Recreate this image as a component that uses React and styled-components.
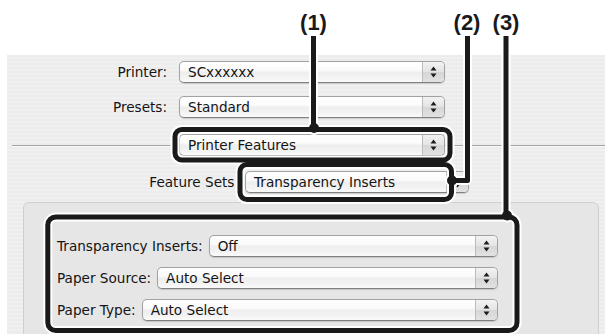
import React from 'react';
import styled, { createGlobalStyle } from 'styled-components';

const GlobalStyle = createGlobalStyle`
  html, body { margin: 0; padding: 0; background: #ffffff; }
  body { font-family: "DejaVu Sans", "Noto Sans", sans-serif; }
`;

const Page = styled.div`
  position: relative;
  width: 605px;
  height: 334px;
  overflow: hidden;
  background: #ffffff;
  display: flex;
  flex-direction: column;
`;

const Header = styled.div`
  height: 55px;
  flex: none;
`;

const Panel = styled.div`
  flex: 1;
  min-height: 0;
  margin-left: 7px;
  padding-top: 6px;
  background: repeating-linear-gradient(to bottom, #ececec 0px, #ececec 2px, #f0f0f0 2px, #f0f0f0 4px);
  display: flex;
  flex-direction: column;
`;

const FormGrid = styled.div`
  display: grid;
  grid-template-columns: 160px 266px;
  column-gap: 12px;
  row-gap: 13px;
  align-items: center;
`;

const Label = styled.span`
  font-size: 13.6px;
  color: #141414;
  white-space: nowrap;
  text-align: ${p => (p.$right ? 'right' : 'left')};
  width: ${p => (p.$w ? `${p.$w}px` : 'auto')};
  flex: none;
`;

const PopupBox = styled.div`
  box-sizing: border-box;
  height: 22px;
  width: ${p => (p.$w ? `${p.$w}px` : 'auto')};
  flex: ${p => (p.$w ? 'none' : '1')};
  display: flex;
  align-items: stretch;
  border: 1px solid #a2a2a2;
  border-bottom-color: #808080;
  border-radius: 5px;
  background: linear-gradient(to bottom, #ffffff 0%, #fbfbfb 40%, #eeeeee 52%, #f3f3f3 80%, #fbfbfb 100%);
  box-shadow: 0 1px 1px rgba(0, 0, 0, 0.15);
  overflow: hidden;
`;

const PopupText = styled.span`
  flex: 1;
  padding-left: 8px;
  font-size: 13.6px;
  line-height: 20px;
  color: #141414;
  white-space: nowrap;
  overflow: hidden;
`;

const Stepper = styled.span`
  width: 21px;
  flex: none;
  border-left: 1px solid #bcbcbc;
  background: linear-gradient(to bottom, #f2f2f2 0%, #e4e4e4 48%, #d6d6d6 52%, #e2e2e2 100%);
  display: flex;
  align-items: center;
  justify-content: center;
`;

const SeparatorRow = styled.div`
  display: flex;
  align-items: center;
  margin-top: 16px;
  height: 22px;
`;

const Rule = styled.div`
  height: 1px;
  background: #a4a4a4;
  box-shadow: 0 1px 0 #fafafa;
  margin-left: ${p => p.$ml || 0}px;
  width: ${p => (p.$w ? `${p.$w}px` : 'auto')};
  flex: ${p => (p.$w ? 'none' : '1')};
`;

const FeatureRow = styled.div`
  display: flex;
  align-items: center;
  gap: 6px;
  margin-top: 15px;
  padding-left: 142px;
`;

const GroupBox = styled.div`
  box-sizing: border-box;
  flex: 1;
  margin: 9px 0 -20px 16px;
  width: 576px;
  border: 1px solid #cfcfcf;
  border-radius: 6px;
  background: #e6e6e6;
  padding: 32px 100px 0 33px;
  display: flex;
  flex-direction: column;
  gap: 10px;
`;

const OptionRow = styled.div`
  display: flex;
  align-items: center;
  gap: 6px;
`;

const Callouts = styled.svg`
  position: absolute;
  left: 0;
  top: 0;
  pointer-events: none;
`;

const CalloutLabel = styled.span`
  position: absolute;
  top: 12px;
  left: ${p => p.$x}px;
  transform: translateX(-50%);
  font-family: "Liberation Sans", Arial, sans-serif;
  font-weight: bold;
  font-size: 22px;
  line-height: 22px;
  color: #1a1a1a;
`;

function Arrows() {
  return (
    <svg width="7" height="14" viewBox="0 0 7 14">
      <polygon points="3.5,1.5 6.5,5.5 0.5,5.5" fill="#1c1c1c" />
      <polygon points="0.5,8.5 6.5,8.5 3.5,12.5" fill="#1c1c1c" />
    </svg>
  );
}

function Popup({ value, w }) {
  return (
    <PopupBox $w={w}>
      <PopupText>{value}</PopupText>
      <Stepper>
        <Arrows />
      </Stepper>
    </PopupBox>
  );
}

const INK = '#1a1a1a';

function CalloutDrawing() {
  const shapes = (stroke, width) => (
    <g fill="none" stroke={stroke} strokeWidth={width} strokeLinejoin="round">
      <path d="M313.5 36 V127" />
      <rect x="175" y="129.5" width="275" height="30.5" rx="7" />
      <rect x="240" y="164.5" width="211.5" height="35" rx="7" />
      <path d="M452 180.5 H467.5 V36" />
      <path d="M506 36 V215" />
      <rect x="47.8" y="217" width="469.2" height="113.5" rx="8" />
    </g>
  );
  const dots = (fill, r) => (
    <g fill={fill}>
      <circle cx="314" cy="128" r={r} />
      <circle cx="452" cy="180.5" r={r} />
      <circle cx="507" cy="215.5" r={r} />
    </g>
  );
  return (
    <Callouts width="605" height="334" viewBox="0 0 605 334">
      {shapes('#ffffff', 9)}
      {dots('#ffffff', 7)}
      {shapes(INK, 5)}
      {dots(INK, 5)}
    </Callouts>
  );
}

export default function App() {
  return (
    <>
      <GlobalStyle />
      <Page>
        <Header />
        <Panel>
          <FormGrid>
            <Label $right>Printer:</Label>
            <Popup value="SCxxxxxx" w={266} />
            <Label $right>Presets:</Label>
            <Popup value="Standard" w={266} />
          </FormGrid>
          <SeparatorRow>
            <Rule $ml={5} $w={167} />
            <Popup value="Printer Features" w={266} />
            <Rule />
          </SeparatorRow>
          <FeatureRow>
            <Label $right $w={90}>Feature Sets:</Label>
            <Popup value="Transparency Inserts" w={224} />
          </FeatureRow>
          <GroupBox>
            <OptionRow>
              <Label>Transparency Inserts:</Label>
              <Popup value="Off" />
            </OptionRow>
            <OptionRow>
              <Label>Paper Source:</Label>
              <Popup value="Auto Select" />
            </OptionRow>
            <OptionRow>
              <Label>Paper Type:</Label>
              <Popup value="Auto Select" />
            </OptionRow>
          </GroupBox>
        </Panel>
        <CalloutDrawing />
        <CalloutLabel $x={313.5}>(1)</CalloutLabel>
        <CalloutLabel $x={467}>(2)</CalloutLabel>
        <CalloutLabel $x={506}>(3)</CalloutLabel>
      </Page>
    </>
  );
}
